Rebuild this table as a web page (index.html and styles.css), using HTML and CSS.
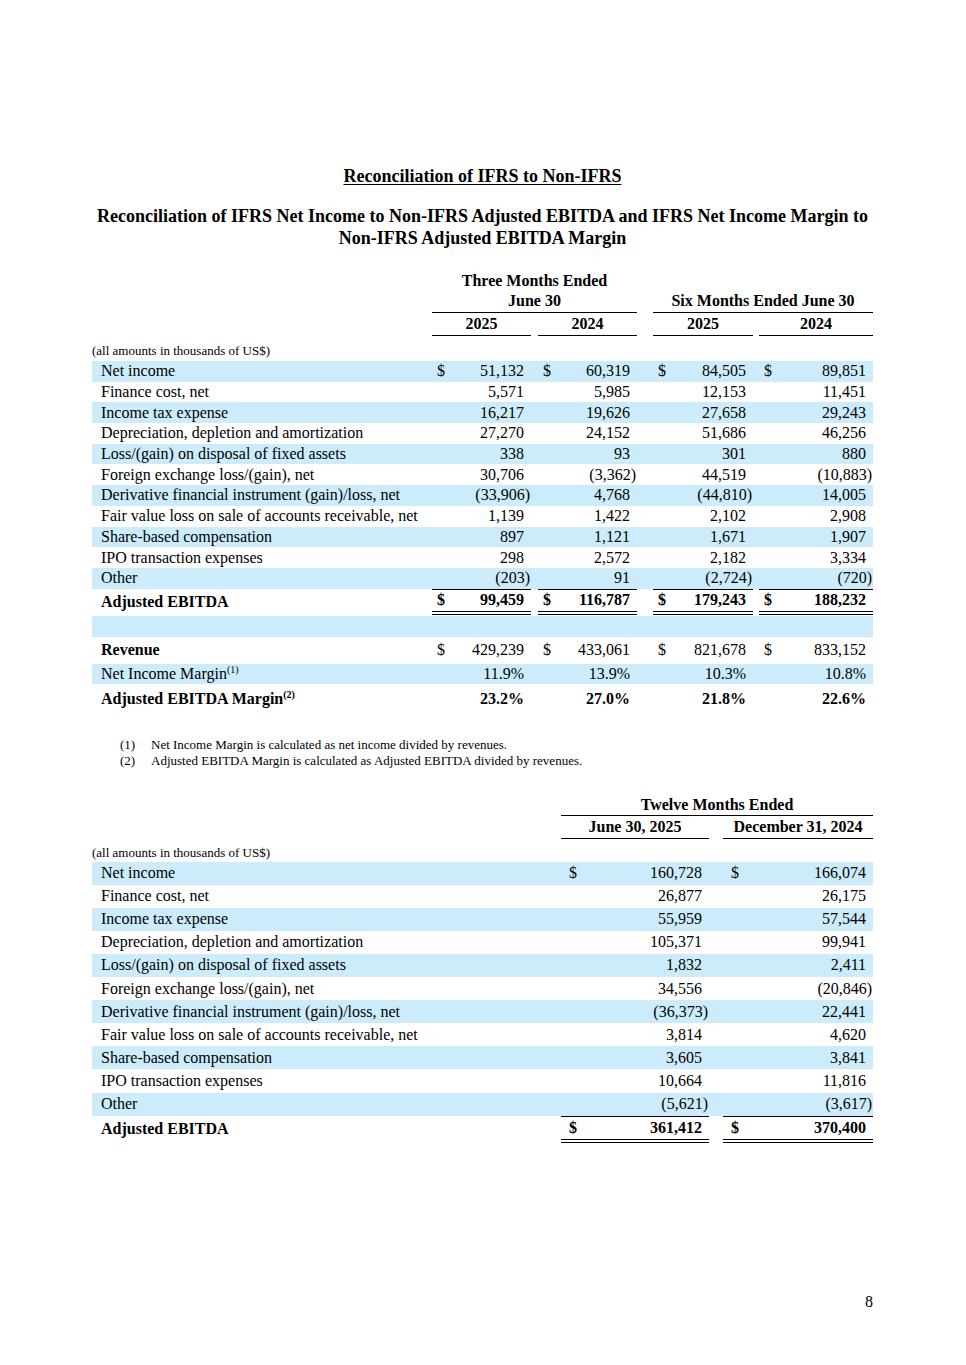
FILE: index.html
```html
<!DOCTYPE html>
<html>
<head>
<meta charset="utf-8">
<link rel="stylesheet" href="styles.css">
</head>
<body>
<div class="page">
  <h1 class="title">Reconciliation of IFRS to Non-IFRS</h1>
  <h2 class="subtitle">Reconciliation of IFRS Net Income to Non-IFRS Adjusted EBITDA and IFRS Net Income Margin to<br>Non-IFRS Adjusted EBITDA Margin</h2>

  <table class="fin t1">
    <colgroup>
      <col class="c-label1"><col class="c-v99"><col class="c-g7"><col class="c-v99"><col class="c-g16"><col class="c-v100"><col class="c-g6"><col class="c-v114">
    </colgroup>
    <tr class="h-top">
      <td></td>
      <td colspan="3" class="hd ul">Three Months Ended<br>June 30</td>
      <td></td>
      <td colspan="3" class="hd ul">Six Months Ended June 30</td>
    </tr>
    <tr class="h-year">
      <td></td>
      <td class="hd ul">2025</td><td></td><td class="hd ul">2024</td><td></td>
      <td class="hd ul">2025</td><td></td><td class="hd ul">2024</td>
    </tr>
    <tr class="h-units"><td class="units" colspan="8">(all amounts in thousands of US$)</td></tr>
    <tr class="r b"><td class="lbl">Net income</td><td class="v"><span class="d">$</span>51,132</td><td></td><td class="v"><span class="d">$</span>60,319</td><td></td><td class="v"><span class="d">$</span>84,505</td><td></td><td class="v"><span class="d">$</span>89,851</td></tr>
    <tr class="r"><td class="lbl">Finance cost, net</td><td class="v">5,571</td><td></td><td class="v">5,985</td><td></td><td class="v">12,153</td><td></td><td class="v">11,451</td></tr>
    <tr class="r b"><td class="lbl">Income tax expense</td><td class="v">16,217</td><td></td><td class="v">19,626</td><td></td><td class="v">27,658</td><td></td><td class="v">29,243</td></tr>
    <tr class="r"><td class="lbl">Depreciation, depletion and amortization</td><td class="v">27,270</td><td></td><td class="v">24,152</td><td></td><td class="v">51,686</td><td></td><td class="v">46,256</td></tr>
    <tr class="r b"><td class="lbl">Loss/(gain) on disposal of fixed assets</td><td class="v">338</td><td></td><td class="v">93</td><td></td><td class="v">301</td><td></td><td class="v">880</td></tr>
    <tr class="r"><td class="lbl">Foreign exchange loss/(gain), net</td><td class="v">30,706</td><td></td><td class="v"><span class="n">(3,362)</span></td><td></td><td class="v">44,519</td><td></td><td class="v"><span class="n">(10,883)</span></td></tr>
    <tr class="r b"><td class="lbl">Derivative financial instrument (gain)/loss, net</td><td class="v"><span class="n">(33,906)</span></td><td></td><td class="v">4,768</td><td></td><td class="v"><span class="n">(44,810)</span></td><td></td><td class="v">14,005</td></tr>
    <tr class="r"><td class="lbl">Fair value loss on sale of accounts receivable, net</td><td class="v">1,139</td><td></td><td class="v">1,422</td><td></td><td class="v">2,102</td><td></td><td class="v">2,908</td></tr>
    <tr class="r b"><td class="lbl">Share-based compensation</td><td class="v">897</td><td></td><td class="v">1,121</td><td></td><td class="v">1,671</td><td></td><td class="v">1,907</td></tr>
    <tr class="r"><td class="lbl">IPO transaction expenses</td><td class="v">298</td><td></td><td class="v">2,572</td><td></td><td class="v">2,182</td><td></td><td class="v">3,334</td></tr>
    <tr class="r b"><td class="lbl">Other</td><td class="v"><span class="n">(203)</span></td><td></td><td class="v">91</td><td></td><td class="v"><span class="n">(2,724)</span></td><td></td><td class="v"><span class="n">(720)</span></td></tr>
    <tr class="r-total"><td class="lbl strong">Adjusted EBITDA</td><td class="v tot"><span class="d">$</span>99,459</td><td></td><td class="v tot"><span class="d">$</span>116,787</td><td></td><td class="v tot"><span class="d">$</span>179,243</td><td></td><td class="v tot"><span class="d">$</span>188,232</td></tr>
    <tr class="r-spacer b"><td></td><td></td><td></td><td></td><td></td><td></td><td></td><td></td></tr>
    <tr class="r-rev"><td class="lbl strong">Revenue</td><td class="v"><span class="d">$</span>429,239</td><td></td><td class="v"><span class="d">$</span>433,061</td><td></td><td class="v"><span class="d">$</span>821,678</td><td></td><td class="v"><span class="d">$</span>833,152</td></tr>
    <tr class="r-nim b"><td class="lbl">Net Income Margin<sup>(1)</sup></td><td class="v">11.9%</td><td></td><td class="v">13.9%</td><td></td><td class="v">10.3%</td><td></td><td class="v">10.8%</td></tr>
    <tr class="r-aem"><td class="lbl strong">Adjusted EBITDA Margin<sup>(2)</sup></td><td class="v strong">23.2%</td><td></td><td class="v strong">27.0%</td><td></td><td class="v strong">21.8%</td><td></td><td class="v strong">22.6%</td></tr>
  </table>

  <ol class="notes">
    <li><span class="num">(1)</span><span>Net Income Margin is calculated as net income divided by revenues.</span></li>
    <li><span class="num">(2)</span><span>Adjusted EBITDA Margin is calculated as Adjusted EBITDA divided by revenues.</span></li>
  </ol>

  <table class="fin t2">
    <colgroup>
      <col class="c-label2"><col class="c-v148"><col class="c-g14"><col class="c-v150">
    </colgroup>
    <tr class="h2-top">
      <td></td>
      <td colspan="3" class="hd ul">Twelve Months Ended</td>
    </tr>
    <tr class="h2-date">
      <td></td>
      <td class="hd ul">June 30, 2025</td><td></td><td class="hd ul">December 31, 2024</td>
    </tr>
    <tr class="h2-units"><td class="units" colspan="4">(all amounts in thousands of US$)</td></tr>
    <tr class="r2 b"><td class="lbl">Net income</td><td class="v"><span class="d">$</span>160,728</td><td></td><td class="v"><span class="d">$</span>166,074</td></tr>
    <tr class="r2"><td class="lbl">Finance cost, net</td><td class="v">26,877</td><td></td><td class="v">26,175</td></tr>
    <tr class="r2 b"><td class="lbl">Income tax expense</td><td class="v">55,959</td><td></td><td class="v">57,544</td></tr>
    <tr class="r2"><td class="lbl">Depreciation, depletion and amortization</td><td class="v">105,371</td><td></td><td class="v">99,941</td></tr>
    <tr class="r2 b"><td class="lbl">Loss/(gain) on disposal of fixed assets</td><td class="v">1,832</td><td></td><td class="v">2,411</td></tr>
    <tr class="r2"><td class="lbl">Foreign exchange loss/(gain), net</td><td class="v">34,556</td><td></td><td class="v"><span class="n">(20,846)</span></td></tr>
    <tr class="r2 b"><td class="lbl">Derivative financial instrument (gain)/loss, net</td><td class="v"><span class="n">(36,373)</span></td><td></td><td class="v">22,441</td></tr>
    <tr class="r2"><td class="lbl">Fair value loss on sale of accounts receivable, net</td><td class="v">3,814</td><td></td><td class="v">4,620</td></tr>
    <tr class="r2 b"><td class="lbl">Share-based compensation</td><td class="v">3,605</td><td></td><td class="v">3,841</td></tr>
    <tr class="r2"><td class="lbl">IPO transaction expenses</td><td class="v">10,664</td><td></td><td class="v">11,816</td></tr>
    <tr class="r2 b"><td class="lbl">Other</td><td class="v"><span class="n">(5,621)</span></td><td></td><td class="v"><span class="n">(3,617)</span></td></tr>
    <tr class="r2-total"><td class="lbl strong">Adjusted EBITDA</td><td class="v tot"><span class="d">$</span>361,412</td><td></td><td class="v tot"><span class="d">$</span>370,400</td></tr>
  </table>

  <div class="pageno">8</div>
</div>
</body>
</html>
```

FILE: styles.css
```css
* { box-sizing: border-box; }

body {
  margin: 0;
  background: #ffffff;
  color: #000000;
  font-family: "Liberation Serif", "Times New Roman", serif;
}

.page {
  width: 966px;
  padding: 166px 93px 0 92px;
}

.title {
  margin: 0;
  font-size: 18px;
  line-height: 20px;
  font-weight: bold;
  text-align: center;
  text-decoration: underline;
  text-decoration-thickness: 1px;
  text-underline-offset: 2px;
}

.subtitle {
  margin: 19px 0 0 0;
  font-size: 18px;
  line-height: 22px;
  font-weight: bold;
  text-align: center;
}

.fin {
  width: 781px;
  table-layout: fixed;
  border-collapse: separate;
  border-spacing: 0;
  font-size: 16px;
}

.fin td {
  padding: 0;
  white-space: nowrap;
  vertical-align: middle;
}

.t1 { margin-top: 22px; }

.c-label1 { width: 340px; }
.c-v99 { width: 99px; }
.c-v100 { width: 100px; }
.c-v114 { width: 114px; }
.c-g7 { width: 7px; }
.c-g16 { width: 16px; }
.c-g6 { width: 6px; }

.c-label2 { width: 469px; }
.c-v148 { width: 148px; }
.c-g14 { width: 14px; }
.c-v150 { width: 150px; }

.hd {
  font-weight: bold;
  text-align: center;
  line-height: 20px;
}

.ul { border-bottom: 1.5px solid #000; }

.h-top { height: 42px; }
.h-top td { vertical-align: bottom; padding-bottom: 1px; }
.h-year { height: 23px; }

.units {
  font-size: 13px;
  line-height: 14px;
  vertical-align: bottom !important;
}
.h-units { height: 25px; }
.h-units .units { padding-bottom: 3px; }

.b td { background: #cdecfb; }

.lbl { padding-left: 9px !important; }
.strong { font-weight: bold; }

.v {
  text-align: right;
  padding-right: 7px !important;
  padding-left: 5px !important;
}
.d { float: left; }
.n { margin-right: -6px; }

.r { height: 20.7px; }
.r-total { height: 26px; }
.tot {
  font-weight: bold;
  border-top: 1px solid #000;
  border-bottom: 4px double #000;
}
.r-spacer { height: 22px; }
.r-spacer td { border-top: 1px solid #fff; }
.r-rev { height: 27px; }
.r-nim { height: 20px; }
.r-aem { height: 30px; }

sup {
  font-size: 10px;
  line-height: 0;
  vertical-align: 6px;
}

.notes {
  list-style: none;
  margin: 23px 0 0 0;
  padding: 0 0 0 28px;
  font-size: 13px;
  line-height: 16px;
}
.notes li { display: flex; }
.notes .num { width: 31px; flex: none; }

.t2 { margin-top: 26px; }
.t2 .v { padding-left: 8px !important; }
.h2-top { height: 21px; }
.h2-date { height: 23px; }
.h2-units { height: 23px; }
.h2-units .units { padding-bottom: 2px; }
.r2 { height: 23.1px; }
.r2-total { height: 27px; }

.pageno {
  margin-top: 150px;
  text-align: right;
  font-size: 16px;
  line-height: 18px;
}
```
